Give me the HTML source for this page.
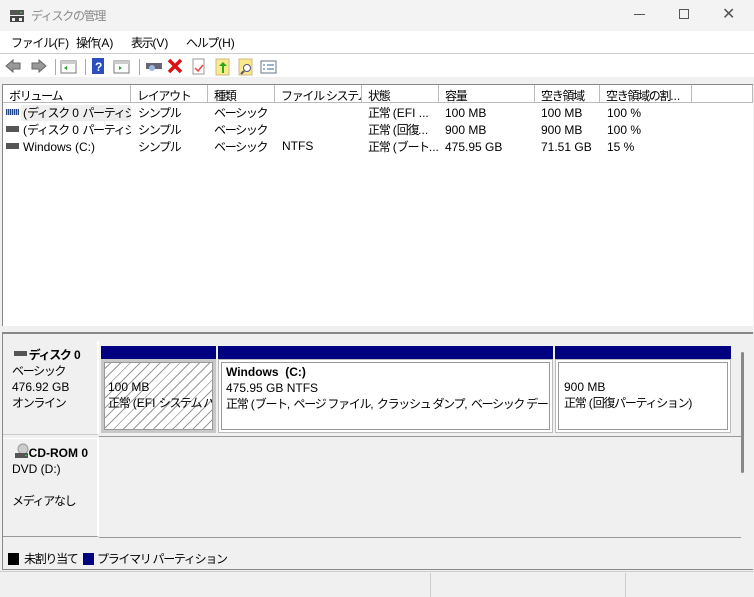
<!DOCTYPE html><html><head><meta charset="utf-8"><style>
*{margin:0;padding:0;box-sizing:border-box}
body{width:754px;height:597px;overflow:hidden;background:#f0f0f0;font:12px "Liberation Sans","Noto Sans CJK JP",sans-serif;color:#000;position:relative}
.a{position:absolute;white-space:nowrap}
.j{font-size:12px;letter-spacing:-1.3px}
.hd{position:absolute;top:85px;height:18px;border-right:1px solid #bbb;border-bottom:1px solid #bbb;background:#fff;padding:2px 0 0 6px;overflow:hidden;white-space:nowrap}
.c{overflow:hidden}
</style></head><body>
<div class="a" style="left:0;top:0;width:754px;height:31px;background:#f3f3f3"></div>
<svg class="a" style="left:9px;top:8px" width="16" height="16"><rect x="1" y="2" width="14" height="5" fill="#555"/><rect x="11" y="4" width="2" height="1" fill="#3c3"/><rect x="1" y="8" width="14" height="6" fill="#444"/><rect x="3" y="10" width="3" height="3" fill="#eee"/><rect x="10" y="10" width="3" height="3" fill="#eee"/></svg>
<div class="a" style="left:31px;top:7px;color:#888"><span class="j">ディスクの管理</span></div>
<div class="a" style="left:634px;top:14px;width:11px;height:1px;background:#555"></div>
<div class="a" style="left:679px;top:9px;width:10px;height:10px;border:1px solid #555"></div>
<div class="a" style="left:722px;top:4px;font-size:16px;color:#555">✕</div>
<div class="a" style="left:0;top:31px;width:754px;height:23px;background:#fff;border-bottom:1px solid #ccc"></div>
<div class="a" style="left:11px;top:34px"><span class="j">ファイル</span>(F)</div>
<div class="a" style="left:76px;top:34px"><span class="j">操作</span>(A)</div>
<div class="a" style="left:131px;top:34px"><span class="j">表示</span>(V)</div>
<div class="a" style="left:186px;top:34px"><span class="j">ヘルプ</span>(H)</div>
<div class="a" style="left:0;top:54px;width:754px;height:23px;background:#fff"></div>
<svg class="a" style="left:4px;top:57px" width="280" height="20">
<path d="M2 9 L9 3 V6 H16 V12 H9 V15Z" fill="#999" stroke="#666"/>
<path d="M42 9 L35 3 V6 H28 V12 H35 V15Z" fill="#999" stroke="#666"/>
<rect x="51" y="2" width="1" height="16" fill="#aaa"/>
<rect x="57" y="4" width="15" height="12" fill="#fff" stroke="#777"/><rect x="57" y="4" width="15" height="3" fill="#ccc"/><path d="M63 9 l-3 2 3 2z" fill="#2a2"/>
<rect x="81" y="2" width="1" height="16" fill="#aaa"/>
<rect x="88" y="1" width="12" height="16" fill="#2b4fbf"/><text x="91" y="14" fill="#fff" font-size="12" font-weight="bold">?</text>
<rect x="110" y="4" width="15" height="12" fill="#fff" stroke="#777"/><rect x="110" y="4" width="15" height="3" fill="#ccc"/><path d="M115 9 l3 2 -3 2z" fill="#2a2"/>
<rect x="135" y="2" width="1" height="16" fill="#aaa"/>
<rect x="142" y="6" width="16" height="6" fill="#667"/><circle cx="148" cy="11" r="3" fill="#9bd"/>
<path d="M165 3 L177 15 M177 3 L165 15" stroke="#d11" stroke-width="3.5"/>
<rect x="189" y="2" width="11" height="15" fill="#fff" stroke="#999"/><path d="M191 11 l3 3 5-6" stroke="#e44" fill="none" stroke-width="1.5"/>
<rect x="212" y="2" width="13" height="16" fill="#fce98a" stroke="#cb8"/><path d="M218 16 V9 H215 L219 5 L223 9 H220 V16Z" fill="#2a2"/>
<rect x="235" y="2" width="13" height="16" fill="#fce98a" stroke="#cb8"/><circle cx="243" cy="11" r="3.5" fill="#fff" stroke="#557"/><path d="M240 14 l-3 3" stroke="#557" stroke-width="2"/>
<rect x="257" y="4" width="15" height="12" fill="#fff" stroke="#678"/><path d="M259 8h2M259 12h2M263 8h7M263 12h7" stroke="#36a"/>
</svg>
<div class="a" style="left:2px;top:84px;width:751px;height:242px;background:#fff;border-left:1px solid #888;border-top:1px solid #888"></div>
<div class="hd" style="left:3px;width:128px"><span class="j">ボリューム</span></div>
<div class="hd" style="left:131px;width:77px"><span class="j">レイアウト</span></div>
<div class="hd" style="left:208px;width:67px"><span class="j">種類</span></div>
<div class="hd" style="left:275px;width:87px"><span class="j">ファイル システム</span></div>
<div class="hd" style="left:362px;width:77px"><span class="j">状態</span></div>
<div class="hd" style="left:439px;width:96px"><span class="j">容量</span></div>
<div class="hd" style="left:535px;width:65px"><span class="j">空き領域</span></div>
<div class="hd" style="left:600px;width:92px"><span class="j">空き領域の割</span>...</div>
<div class="hd" style="left:692px;width:61px"></div>
<div class="a" style="left:21px;top:105px;width:110px;height:16px;background:#eee"></div>
<div class="a" style="left:6px;top:109px;width:13px;height:6px;background:repeating-linear-gradient(90deg,#248 0 1px,#9bd 1px 2px)"></div>
<div class="a" style="left:6px;top:126px;width:13px;height:6px;background:#555"></div>
<div class="a" style="left:6px;top:143px;width:13px;height:6px;background:#555"></div>
<div class="a c" style="left:23px;top:105px;line-height:17px;width:108px">(<span class="j">ディスク</span> 0 <span class="j">パーティシ</span>...<br>(<span class="j">ディスク</span> 0 <span class="j">パーティシ</span>...<br>Windows (C:)</div>
<div class="a" style="left:138px;top:105px;line-height:17px"><span class="j">シンプル<br>シンプル<br>シンプル</span></div>
<div class="a" style="left:214px;top:105px;line-height:17px"><span class="j">ベーシック<br>ベーシック<br>ベーシック</span></div>
<div class="a" style="left:282px;top:139px">NTFS</div>
<div class="a c" style="left:368px;top:105px;line-height:17px;width:70px"><span class="j">正常</span> (EFI ...<br><span class="j">正常</span> (<span class="j">回復</span>...<br><span class="j">正常</span> (<span class="j">ブート</span>...</div>
<div class="a" style="left:445px;top:105px;line-height:17px">100 MB<br>900 MB<br>475.95 GB</div>
<div class="a" style="left:541px;top:105px;line-height:17px">100 MB<br>900 MB<br>71.51 GB</div>
<div class="a" style="left:607px;top:105px;line-height:17px">100 %<br>100 %<br>15 %</div>
<div class="a" style="left:2px;top:332px;width:751px;height:2px;background:#888"></div>
<div class="a" style="left:2px;top:334px;width:1px;height:236px;background:#888"></div>
<div class="a" style="left:3px;top:341px;width:96px;height:94px;border-right:2px solid #fff;border-bottom:1px solid #ccc"></div>
<div class="a" style="left:14px;top:351px;width:13px;height:5px;background:#555"></div>
<div class="a" style="left:12px;top:347px;line-height:16px"><b>&nbsp;&nbsp;&nbsp;&nbsp;&nbsp;<span class="j">ディスク</span> 0</b><br><span class="j">ベーシック</span><br>476.92 GB<br><span class="j">オンライン</span></div>
<div class="a" style="left:99px;top:341px;width:642px;height:96px;border-bottom:1px solid #999"></div>
<div class="a" style="left:101px;top:346px;width:115px;height:13px;background:#000080"></div>
<div class="a" style="left:218px;top:346px;width:335px;height:13px;background:#000080"></div>
<div class="a" style="left:555px;top:346px;width:176px;height:13px;background:#000080"></div>
<div class="a" style="left:101px;top:359px;width:115px;height:74px;background:#c8c8c8;padding:3px"><div style="width:100%;height:100%;border:1px solid #999;background:repeating-linear-gradient(-45deg,#fff 0 6px,#999 6px 7px)"></div></div>
<div class="a c" style="left:108px;top:379px;line-height:16px;width:104px">100 MB<br><span class="j">正常</span> (EFI <span class="j">システム パ-</span></div>
<div class="a" style="left:218px;top:359px;width:335px;height:74px;border:1px solid #bbb;background:#fff;padding:2px"><div style="width:100%;height:100%;border:1px solid #999"></div></div>
<div class="a c" style="left:226px;top:364px;line-height:16px;width:322px"><b>Windows&nbsp; (C:)</b><br>475.95 GB NTFS<br><span class="j">正常</span> (<span class="j">ブート</span>, <span class="j">ページ ファイル</span>, <span class="j">クラッシュ ダンプ</span>, <span class="j">ベーシック データ パーティ</span></div>
<div class="a" style="left:555px;top:359px;width:176px;height:74px;border:1px solid #bbb;background:#fff;padding:2px"><div style="width:100%;height:100%;border:1px solid #999"></div></div>
<div class="a" style="left:564px;top:379px;line-height:16px">900 MB<br><span class="j">正常</span> (<span class="j">回復パーティション</span>)</div>
<div class="a" style="left:3px;top:438px;width:96px;height:99px;border-right:2px solid #fff;border-top:1px solid #fff;border-bottom:1px solid #999"></div>
<svg class="a" style="left:14px;top:443px" width="16" height="16"><circle cx="9" cy="6" r="5" fill="#ccc" stroke="#999"/><rect x="1" y="10" width="13" height="5" fill="#555"/><rect x="11" y="12" width="2" height="1" fill="#3c3"/></svg>
<div class="a" style="left:12px;top:445px;line-height:16px"><b>&nbsp;&nbsp;&nbsp;&nbsp;&nbsp;CD-ROM 0</b><br>DVD (D:)<br><br><span class="j">メディアなし</span></div>
<div class="a" style="left:99px;top:537px;width:642px;height:1px;background:#999"></div>
<div class="a" style="left:741px;top:340px;width:12px;height:210px;background:#f0f0f0"></div>
<div class="a" style="left:741px;top:352px;width:3px;height:121px;background:#888;border-radius:2px"></div>
<div class="a" style="left:2px;top:548px;width:751px;height:22px;border-bottom:1px solid #888"></div>
<div class="a" style="left:8px;top:553px;width:11px;height:12px;background:#000"></div>
<div class="a" style="left:24px;top:550px"><span class="j">未割り当て</span></div>
<div class="a" style="left:83px;top:553px;width:11px;height:12px;background:#000080"></div>
<div class="a" style="left:97px;top:550px"><span class="j">プライマリ パーティション</span></div>
<div class="a" style="left:0;top:571px;width:754px;height:26px;border-top:1px solid #ccc"></div>
<div class="a" style="left:430px;top:573px;width:1px;height:24px;background:#ccc"></div>
<div class="a" style="left:625px;top:573px;width:1px;height:24px;background:#ccc"></div>
</body></html>
